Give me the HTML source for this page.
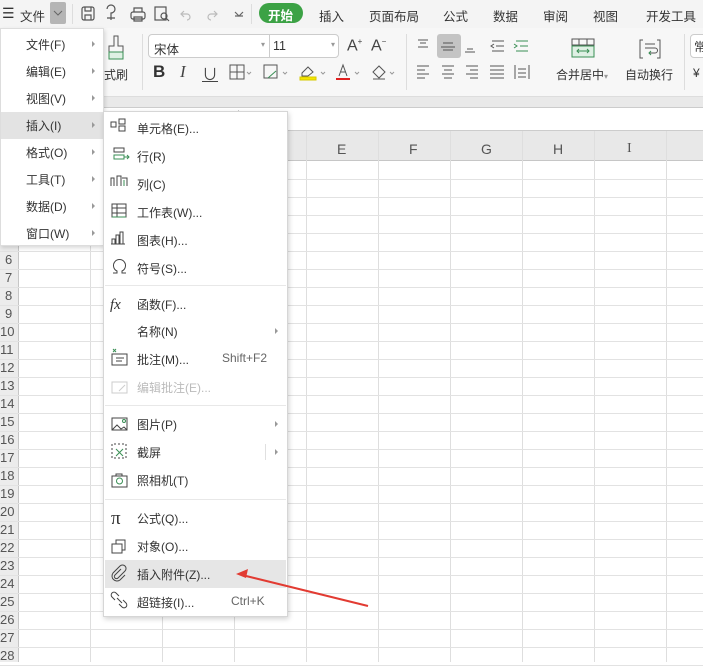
<!DOCTYPE html>
<html><head><meta charset="utf-8"><style>
*{margin:0;padding:0;box-sizing:border-box}
body{width:703px;height:662px;overflow:hidden;position:relative;background:#fff;font-family:"Liberation Sans","Noto Sans CJK SC",sans-serif;font-size:12px;color:#333}
.a{position:absolute}
.t{position:absolute;white-space:nowrap}
.menu .t{font-size:12px;color:#333}
.arr{position:absolute;width:0;height:0;border-left:3px solid #999;border-top:3px solid transparent;border-bottom:3px solid transparent}
.hl{position:absolute;border-top:1px solid #ddd}
.vl{position:absolute;border-left:1px solid #d8d8d8}
</style></head><body>
<!-- top bar -->
<div class="a" style="left:0;top:0;width:703px;height:28px;background:#f4f4f4"></div>
<div class="t" style="left:2px;top:5px;font-size:14px">☰</div>
<div class="t" style="left:20px;top:6px;font-size:12.5px">文件</div>
<div class="a" style="left:50px;top:2px;width:16px;height:22px;background:#b5b5b5;border-radius:2px"></div>
<svg class="a" style="left:52px;top:8px" width="12" height="10"><path d="M2 3l4 4 4-4" stroke="#666" fill="none"/></svg>
<div class="vl" style="left:72px;top:4px;height:20px;border-color:#ddd"></div>
<svg class="a" style="left:80px;top:4px" width="175" height="20" fill="none" stroke="#555" stroke-width="1.2">
<rect x="2" y="3" width="12" height="13" rx="2"/><path d="M5 3v4h6V3M5 16v-5h6v5"/>
<path d="M27 5a4 4 0 1 1 4 4v7M27 14h8"/>
<rect x="51" y="8" width="14" height="7" rx="2"/><path d="M54 8V4h8v4M54 13h8v4h-8z"/>
<rect x="75" y="3" width="11" height="13"/><circle cx="84" cy="12" r="3"/><path d="M86 14l3 3"/>
<path d="M104 7l-3 3 3 3M101 10h6a3 3 0 0 1 0 6" stroke="#bbb"/>
<path d="M134 7l3 3-3 3M137 10h-6a3 3 0 0 0 0 6" stroke="#bbb"/>
<path d="M155 8l4 4 4-4M155 12h8" stroke="#666"/>
</svg>
<div class="vl" style="left:251px;top:4px;height:20px;border-color:#ddd"></div>
<div class="a" style="left:259px;top:3px;width:44px;height:20px;background:#3ca245;border-radius:10px"></div>
<div class="t" style="left:268px;top:5px;color:#fff;font-weight:bold;font-size:12.5px">开始</div>
<div class="t" style="left:319px;top:6px;font-size:12.5px">插入</div>
<div class="t" style="left:369px;top:6px;font-size:12.5px">页面布局</div>
<div class="t" style="left:443px;top:6px;font-size:12.5px">公式</div>
<div class="t" style="left:493px;top:6px;font-size:12.5px">数据</div>
<div class="t" style="left:543px;top:6px;font-size:12.5px">审阅</div>
<div class="t" style="left:593px;top:6px;font-size:12.5px">视图</div>
<div class="t" style="left:646px;top:6px;font-size:12.5px">开发工具</div>
<!-- ribbon -->
<div class="a" style="left:0;top:28px;width:703px;height:68px;background:#f7f7f7"></div>
<div class="a" style="left:0;top:96px;width:703px;height:12px;background:#e9e9e9;border-top:1px solid #ddd;border-bottom:1px solid #ccc"></div>
<svg class="a" style="left:104px;top:34px" width="24" height="30" fill="none" stroke="#555"><path d="M10 2h4v10h5v6H5v-6h5z"/><rect x="5" y="18" width="14" height="7" stroke="#3a8f55" fill="#dff0e4"/></svg>
<div class="t" style="left:104px;top:66px;font-size:12px">式刷</div>
<div class="vl" style="left:142px;top:34px;height:56px;border-color:#ddd"></div>
<div class="a" style="left:148px;top:34px;width:191px;height:24px;background:#fff;border:1px solid #ccc;border-radius:4px"></div>
<div class="vl" style="left:269px;top:35px;height:22px;border-color:#ccc"></div>
<div class="t" style="left:154px;top:39px;font-size:12.5px">宋体</div>
<div class="t" style="left:261px;top:40px;font-size:8px;color:#999">▾</div>
<div class="t" style="left:273px;top:39px;font-size:12.5px">11</div>
<div class="t" style="left:331px;top:40px;font-size:8px;color:#999">▾</div>
<div class="t" style="left:347px;top:37px;font-size:16px;color:#444">A<sup style="font-size:8px">+</sup></div>
<div class="t" style="left:371px;top:37px;font-size:16px;color:#444">A<sup style="font-size:8px">−</sup></div>
<div class="t" style="left:153px;top:62px;font-size:17px;font-weight:bold;color:#333">B</div>
<div class="t" style="left:180px;top:62px;font-size:17px;font-style:italic;font-family:'Liberation Serif',serif;color:#444">I</div>
<div class="t" style="left:202px;top:61px;font-size:16px;text-decoration:underline;color:#444">∪</div>
<svg class="a" style="left:228px;top:62px" width="180" height="20" fill="none" stroke="#555">
<rect x="2" y="3" width="14" height="14"/><path d="M9 3v14M2 10h14"/>
<path d="M19 10l2 2 2-2" stroke="#999"/>
<rect x="36" y="3" width="13" height="13"/><path d="M40 16l8-7" stroke="#3a8f55"/>
<path d="M55 10l2 2 2-2" stroke="#999"/>
<path d="M74 11l6-6 5 5-5 4h-6z"/><rect x="72" y="15" width="16" height="3" fill="#f5e600" stroke="#d6c800"/>
<path d="M93 10l2 2 2-2" stroke="#999"/>
<path d="M111 14l4-11 4 11M113 10h5"/><rect x="108" y="16" width="14" height="2" fill="#e02020" stroke="none"/>
<path d="M127 10l2 2 2-2" stroke="#999"/>
<path d="M145 10l6-6 6 6-6 6z"/><path d="M145 17h12"/>
<path d="M162 10l2 2 2-2" stroke="#999"/>
</svg>
<div class="vl" style="left:406px;top:34px;height:56px;border-color:#ddd"></div>
<div class="a" style="left:437px;top:34px;width:24px;height:24px;background:#c4c4c4;border-radius:3px"></div>
<svg class="a" style="left:414px;top:36px" width="130" height="50" fill="none" stroke="#555">
<path d="M4 4h10M6 7h6M4 11h10"/>
<path d="M29 7h10M27 11h14M29 14h10"/>
<path d="M53 13h6M51 16h10"/>
<path d="M78 5h12M82 10h8M78 15h12M80 8l-3 2 3 2" stroke="#555"/>
<path d="M102 5h12M106 10h8M102 15h12M100 8l3 2-3 2" stroke="#3a8f55"/>
<path d="M3 30h12M3 34h8M3 38h12M3 42h8"/>
<path d="M28 30h12M30 34h8M28 38h12M30 42h8"/>
<path d="M52 30h12M56 34h8M52 38h12M56 42h8"/>
<path d="M76 30h14M76 34h14M76 38h14M76 42h14"/>
<path d="M101 29v14M115 29v14M104 33h8M104 37h8M104 41h8"/>
</svg>
<svg class="a" style="left:569px;top:36px" width="28" height="24" fill="none"><rect x="3" y="3" width="22" height="18" stroke="#555"/><rect x="3" y="10" width="22" height="11" fill="#dff0e4" stroke="#3a8f55"/><path d="M3 9h22M10 3v6M18 3v6" stroke="#555"/><path d="M8 15h12M10 13l-2 2 2 2M18 13l2 2-2 2" stroke="#3a8f55"/></svg>
<div class="t" style="left:556px;top:66px">合并居中<span style="font-size:8px;color:#999">▾</span></div>
<svg class="a" style="left:638px;top:38px" width="24" height="22" fill="none" stroke="#555"><path d="M5 2H2v18h3M19 2h3v18h-3M7 6h10M7 10h10a2 2 0 0 1 0 5h-6"/><path d="M13 13l-2 2 2 2" stroke="#3a8f55"/></svg>
<div class="t" style="left:625px;top:66px">自动换行</div>
<div class="vl" style="left:684px;top:34px;height:56px;border-color:#ddd"></div>
<div class="a" style="left:690px;top:34px;width:20px;height:24px;background:#fff;border:1px solid #ccc;border-radius:4px"></div>
<div class="t" style="left:694px;top:38px">常</div>
<div class="t" style="left:693px;top:66px">¥</div>
<!-- formula bar -->
<div class="a" style="left:0;top:108px;width:703px;height:23px;background:#fff;border-bottom:1px solid #ccc"></div>
<div class="a" style="left:238px;top:110px;width:465px;height:21px;border-left:1px solid #ccc"></div>
<!-- grid -->
<div class="a" style="left:0;top:131px;width:703px;height:30px;background:#e8e8e8;border-bottom:1px solid #c6c6c6"></div>
<div class="a" style="left:0;top:161px;width:19px;height:501px;background:#ececec;border-right:1px solid #c6c6c6"></div>
<div id="g"></div>
<div class="t" style="left:337px;top:141px;font-size:14px;color:#555">E</div>
<div class="t" style="left:409px;top:141px;font-size:14px;color:#555">F</div>
<div class="t" style="left:481px;top:141px;font-size:14px;color:#555">G</div>
<div class="t" style="left:553px;top:141px;font-size:14px;color:#555">H</div>
<div class="t" style="left:627px;top:141px;font-size:14px;color:#555;font-family:'Liberation Serif',serif">I</div>
<!-- left menu -->
<div class="a menu" style="left:0;top:28px;width:104px;height:218px;background:#fff;border:1px solid #ddd;box-shadow:1px 2px 4px rgba(0,0,0,.15)">
<div class="a" style="left:0;top:83px;width:103px;height:27px;background:#e3e3e3"></div>
</div>
<!-- submenu -->
<div class="a menu" style="left:103px;top:111px;width:185px;height:506px;background:#fff;border:1px solid #d6d6d6;box-shadow:1px 2px 5px rgba(0,0,0,.18)">
<div class="a" style="left:1px;top:448px;width:181px;height:28px;background:#e6e6e6"></div>
<div class="hl" style="left:1px;top:173px;width:181px;border-color:#e8e8e8"></div>
<div class="hl" style="left:1px;top:293px;width:181px;border-color:#e8e8e8"></div>
<div class="hl" style="left:1px;top:387px;width:181px;border-color:#e8e8e8"></div>
</div>
<div id="m"></div>
<svg class="a" style="left:110px;top:118px" width="22" height="495" fill="none" stroke="#444" stroke-width="1">
<rect x="1" y="4" width="5" height="5"/><rect x="9" y="1" width="6" height="5"/><rect x="9" y="8" width="6" height="5"/>
<rect x="4" y="30" width="10" height="4"/><rect x="4" y="37" width="10" height="4" stroke="#3a8f55"/><path d="M14 39h5M17 37l2 2-2 2" stroke="#3a8f55"/>
<path d="M1 68v-8h3v8M7 68v-10h4v10M12 60h5v8" /><path d="M14 62v6" stroke="#3a8f55"/>
<rect x="2" y="86" width="14" height="13"/><path d="M2 90h14M2 95h14M7 86v13" /><path d="M2 99h14" stroke="#3a8f55"/>
<path d="M2 126v-5h3v5M6 126v-9h3v9M10 126v-12h3v12M1 126h14"/>
<path d="M3 155h4v-2a6 6 0 1 1 5 0v2h4"/>
<text x="0" y="191" font-size="15" font-style="italic" fill="#333" stroke="none" font-family="Liberation Serif">fx</text>
<rect x="2" y="236" width="15" height="11"/><path d="M6 240h8M6 243h6"/><path d="M3 231l3 3M6 231l-3 3" stroke="#3a8f55"/>
<rect x="2" y="264" width="15" height="11" stroke="#ccc"/><path d="M9 273l6-6" stroke="#ccc"/>
<rect x="2" y="300" width="15" height="12"/><path d="M2 312l5-5 4 4 3-2 3 3"/><circle cx="14" cy="303" r="1.5" stroke="#3a8f55"/>
<path d="M2 326v14h14V326z" stroke-dasharray="2 2"/><path d="M6 338l7-7M6 331l7 7" stroke="#3a8f55"/>
<rect x="2" y="358" width="15" height="11"/><circle cx="9.5" cy="363" r="3" stroke="#3a8f55"/><path d="M6 358v-2h6v2"/>
<text x="1" y="406" font-size="19" fill="#333" stroke="none" font-family="Liberation Serif">π</text>
<rect x="2" y="426" width="10" height="9"/><path d="M6 426v-4h9v10h-3"/>
<path d="M11 451l-6 6a2 2 0 0 0 3 3l7-7a3.5 3.5 0 0 0-5-5l-7 7a5 5 0 0 0 7 7l5-5" />
<path d="M9 478l-3-3a2.5 2.5 0 0 0-4 4l3 3M9 486l3 3a2.5 2.5 0 0 0 4-4l-3-3M7 480l5 5"/>
</svg>
<svg class="a" style="left:0;top:0" width="703" height="662"><path d="M368 606L242 575" stroke="#e23b32" stroke-width="2"/><path d="M236 574l12-5-2 9z" fill="#e23b32"/></svg>
<script>
var g='';
var cols=[90,162,234,306,378,450,522,594,666];
cols.forEach(function(x){g+='<div class="vl" style="left:'+x+'px;top:131px;height:531px;border-color:#dedede"></div>';});
for(var r=1;r<=28;r++){var y=161+r*18;g+='<div class="hl" style="left:0;top:'+y+'px;width:703px;border-color:#e2e2e2"></div>';
g+='<div class="t" style="left:'+(r<10?5:0)+'px;top:'+(y-17)+'px;font-size:13px;color:#555;width:'+(r<10?14:19)+'px">'+r+'</div>';}
document.getElementById('g').innerHTML=g;
var m='';
var L=[['文件(F)',44],['编辑(E)',71],['视图(V)',98],['插入(I)',125],['格式(O)',152],['工具(T)',179],['数据(D)',206],['窗口(W)',233]];
L.forEach(function(a){m+='<div class="t" style="left:26px;top:'+(a[1]-8)+'px;font-size:12px;color:#333">'+a[0]+'</div><div class="arr" style="left:92px;top:'+(a[1]-3)+'px"></div>';});
var S=[['单元格(E)...',128],['行(R)',156],['列(C)',184],['工作表(W)...',212],['图表(H)...',240],['符号(S)...',268],['函数(F)...',304],['名称(N)',331,1],['批注(M)...',359,0,'Shift+F2'],['编辑批注(E)...',387,0,0,1],['图片(P)',424,1],['截屏',452,1],['照相机(T)',480],['公式(Q)...',518],['对象(O)...',546],['插入附件(Z)...',574],['超链接(I)...',602,0,'Ctrl+K']];
S.forEach(function(a){m+='<div class="t" style="left:137px;top:'+(a[1]-8)+'px;font-size:12px;color:'+(a[4]?'#bbb':'#333')+'">'+a[0]+'</div>';
if(a[2])m+='<div class="arr" style="left:275px;top:'+(a[1]-3)+'px"></div>';
if(a[3])m+='<div class="t" style="left:'+(a[3][0]=='S'?222:231)+'px;top:'+(a[1]-8)+'px;font-size:12px;color:#666">'+a[3]+'</div>';});
m+='<div class="vl" style="left:265px;top:444px;height:16px;border-color:#e0e0e0"></div>';
document.getElementById('m').innerHTML=m;
</script>
</body></html>
